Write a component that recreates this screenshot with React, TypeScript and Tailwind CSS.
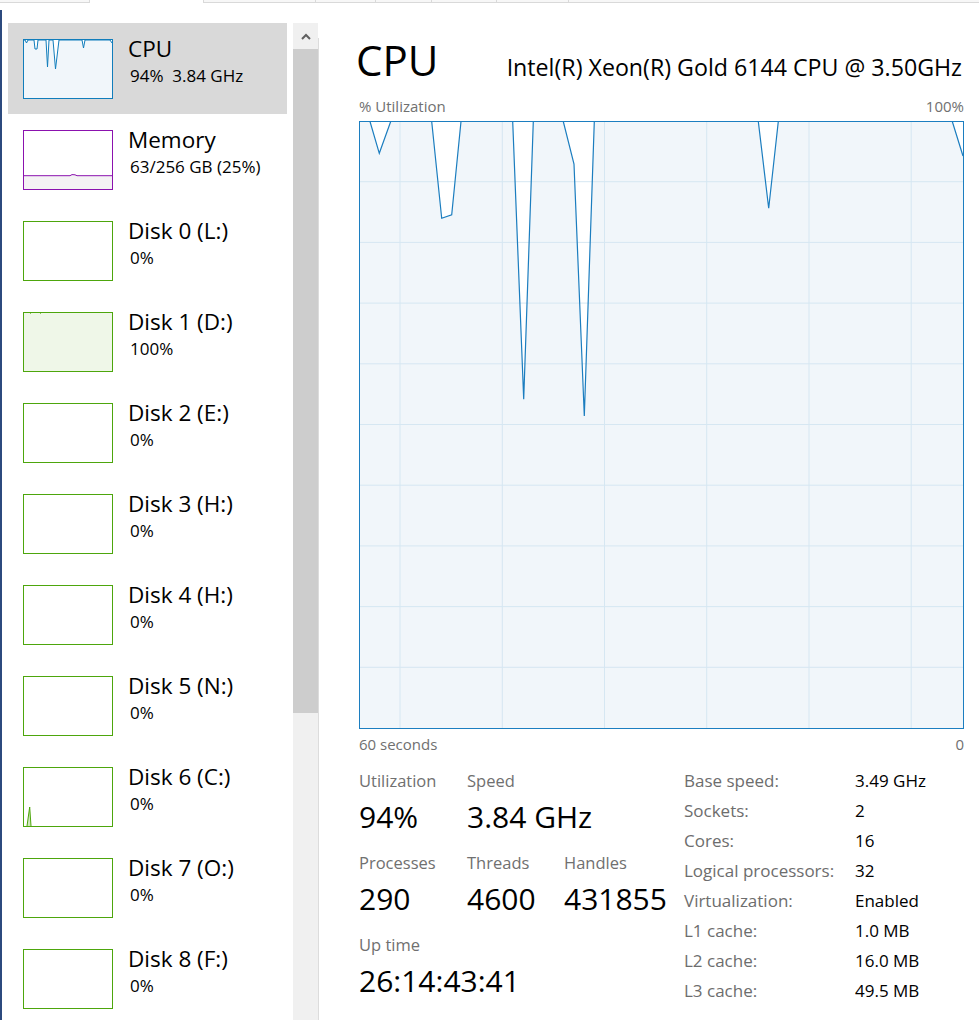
import React from "react";

type Item = {
  title: string;
  sub: string;
  kind: "cpu" | "mem" | "disk" | "diskFull" | "diskSpike";
};

const items: Item[] = [
  { title: "CPU", sub: "94%  3.84 GHz", kind: "cpu" },
  { title: "Memory", sub: "63/256 GB (25%)", kind: "mem" },
  { title: "Disk 0 (L:)", sub: "0%", kind: "disk" },
  { title: "Disk 1 (D:)", sub: "100%", kind: "diskFull" },
  { title: "Disk 2 (E:)", sub: "0%", kind: "disk" },
  { title: "Disk 3 (H:)", sub: "0%", kind: "disk" },
  { title: "Disk 4 (H:)", sub: "0%", kind: "disk" },
  { title: "Disk 5 (N:)", sub: "0%", kind: "disk" },
  { title: "Disk 6 (C:)", sub: "0%", kind: "diskSpike" },
  { title: "Disk 7 (O:)", sub: "0%", kind: "disk" },
  { title: "Disk 8 (F:)", sub: "0%", kind: "disk" },
];

// main graph points, relative to the graph box (605 x 608)
const linePts: [number, number][] = [
  [0, 0.5], [11, 0.5], [20.3, 32.3], [31.7, 0.5], [72.7, 0.5], [82.7, 97.3],
  [92.7, 93.7], [102, 0.5], [153.7, 0.5], [164.7, 278.3], [174.3, 0.5],
  [204.3, 0.5], [215, 43], [225.3, 295], [235.3, 0.5], [399.3, 0.5],
  [409.7, 87.3], [419.3, 0.5], [593.3, 0.5], [604, 35],
];

const cpuThumbPts: [number, number][] = [
  [0, 0], [1, 0], [2.5, 3], [4, 0], [10, 0], [11, 9], [13, 9], [14, 0],
  [22, 0], [23.5, 27], [25, 0], [29, 0], [31.5, 29], [35, 0], [58, 0],
  [59.5, 8], [61, 0], [86, 0], [88, 3],
];

const toStr = (p: [number, number][]) => p.map(([x, y]) => `${x},${y}`).join(" ");

const Thumb: React.FC<{ kind: Item["kind"] }> = ({ kind }) => {
  if (kind === "cpu") {
    return (
      <div className="w-[90px] h-[60px] border border-[#117dbb] bg-white shrink-0">
        <svg width="88" height="58" viewBox="0 0 88 58">
          <polygon points={`${toStr(cpuThumbPts)} 88,58 0,58`} fill="#f1f6fa" />
          <polyline points={toStr(cpuThumbPts)} fill="none" stroke="#117dbb" strokeWidth="1" />
        </svg>
      </div>
    );
  }
  if (kind === "mem") {
    const pts: [number, number][] = [[0, 44.7], [46, 44.7], [48, 43.6], [51, 43.8], [53, 44.7], [88, 44.7]];
    return (
      <div className="w-[90px] h-[60px] border border-[#8b12ae] bg-white shrink-0">
        <svg width="88" height="58" viewBox="0 0 88 58">
          <polygon points={`${toStr(pts)} 88,58 0,58`} fill="#f4f2f4" />
          <polyline points={toStr(pts)} fill="none" stroke="#8b12ae" strokeWidth="1" />
        </svg>
      </div>
    );
  }
  if (kind === "diskFull") {
    return (
      <div className="w-[90px] h-[60px] border border-[#4da60c] bg-[#eff7e8] shrink-0">
        <svg width="88" height="58" viewBox="0 0 88 58">
          <line x1="6" y1="0.5" x2="7" y2="0.5" stroke="#8cc65c" />
          <line x1="16" y1="0.5" x2="17" y2="0.5" stroke="#8cc65c" />
        </svg>
      </div>
    );
  }
  if (kind === "diskSpike") {
    const pts: [number, number][] = [[3, 58], [5.7, 39], [7, 58]];
    return (
      <div className="w-[90px] h-[60px] border border-[#4da60c] bg-white shrink-0">
        <svg width="88" height="58" viewBox="0 0 88 58">
          <polygon points={toStr(pts)} fill="#cfe8bc" />
          <polyline points={toStr(pts)} fill="none" stroke="#4da60c" strokeWidth="1" />
        </svg>
      </div>
    );
  }
  return <div className="w-[90px] h-[60px] border border-[#4da60c] bg-white shrink-0" />;
};

const Graph: React.FC = () => {
  const vx = [41, 143.3, 245.5, 347.7, 450, 552.2];
  const hy = [1, 2, 3, 4, 5, 6, 7, 8, 9].map((k) => k * 60.7);
  return (
    <svg width="605" height="608" viewBox="0 0 605 608" className="block">
      <rect x="0" y="0" width="605" height="608" fill="#ffffff" />
      <polygon points={`${toStr(linePts)} 604,607 0,607`} fill="#f1f6fa" />
      {vx.map((x) => (
        <line key={x} x1={x} y1="0" x2={x} y2="608" stroke="#d6e7f2" strokeWidth="1" />
      ))}
      {hy.map((y) => (
        <line key={y} x1="0" y1={y} x2="605" y2={y} stroke="#d6e7f2" strokeWidth="1" />
      ))}
      <polyline points={toStr(linePts)} fill="none" stroke="#1b7dbf" strokeWidth="1.2" />
      <rect x="0.5" y="0.5" width="604" height="607" fill="none" stroke="#1c7ec0" strokeWidth="1" />
    </svg>
  );
};

const specs: [string, string][] = [
  ["Base speed:", "3.49 GHz"],
  ["Sockets:", "2"],
  ["Cores:", "16"],
  ["Logical processors:", "32"],
  ["Virtualization:", "Enabled"],
  ["L1 cache:", "1.0 MB"],
  ["L2 cache:", "16.0 MB"],
  ["L3 cache:", "49.5 MB"],
];

const Stat: React.FC<{ label: string; value: string }> = ({ label, value }) => (
  <div className="flex flex-col">
    <span className="text-[16.5px] leading-[20px] text-[#707070]">{label}</span>
    <span className="mt-[9px] text-[30px] leading-[34px] text-black whitespace-nowrap">{value}</span>
  </div>
);

export default function App() {
  return (
    <div className="w-[979px] h-[1020px] bg-white overflow-hidden flex flex-col font-['Open_Sans',sans-serif] text-black">
      {/* tab strip remnants */}
      <div className="flex h-[3px] shrink-0">
        <div className="w-[90px] border-b border-r border-[#d9d9d9] bg-[#f7f7f7]" />
        <div className="w-[114px] border-r border-[#d9d9d9]" />
        <div className="w-[112px] border-b border-r border-[#d9d9d9] bg-[#f7f7f7]" />
        <div className="w-[60px] border-b border-r border-[#d9d9d9] bg-[#f7f7f7]" />
        <div className="w-[56px] border-b border-r border-[#d9d9d9] bg-[#f7f7f7]" />
        <div className="w-[65px] border-b border-r border-[#d9d9d9] bg-[#f7f7f7]" />
        <div className="w-[72px] border-b border-r border-[#d9d9d9] bg-[#f7f7f7]" />
        <div className="flex-1 border-b border-[#d9d9d9] bg-[#f7f7f7]" />
      </div>

      <div className="flex flex-1 min-h-0">
        {/* desktop edge */}
        <div className="w-[2px] mt-[7px] bg-[#2c4a7e] shrink-0" />
        <div className="w-[6px] shrink-0" />

        {/* Sidebar list */}
        <div className="w-[279px] pt-[20px] flex flex-col shrink-0">
          {items.map((it, i) => (
            <div
              key={it.title}
              className={`h-[91px] shrink-0 flex items-start pl-[15px] pt-[16px] ${i === 0 ? "bg-[#d9d9d9]" : ""}`}
            >
              <Thumb kind={it.kind} />
              <div className="ml-[15px] -mt-[3px] flex flex-col">
                <span className="text-[22.5px] leading-[26px] whitespace-nowrap">{it.title}</span>
                <span className="mt-[4px] pl-[2px] text-[17px] leading-[20px] whitespace-pre">{it.sub}</span>
              </div>
            </div>
          ))}
        </div>
        <div className="w-[6px] shrink-0" />

        {/* Scrollbar */}
        <div className="w-[25px] mt-[20px] flex flex-col shrink-0">
          <div className="h-[26px] bg-[#f0f0f0] flex items-center justify-center">
            <svg width="10" height="7" viewBox="0 0 10 7">
              <polyline points="1,6 5,2 9,6" fill="none" stroke="#606060" strokeWidth="2" />
            </svg>
          </div>
          <div className="h-[664px] bg-[#cdcdcd]" />
          <div className="flex-1 bg-[#f0f0f0]" />
        </div>
        <div className="w-px mt-[35px] bg-[#dcdcdc] shrink-0" />

        {/* Main panel */}
        <div className="flex-1 pl-[40px] pr-[15px] flex flex-col">
          <div className="pt-[36px] flex items-baseline justify-between">
            <span className="-ml-[3px] text-[42px] leading-[42px]">CPU</span>
            <span className="text-[23.2px] leading-[28px] mr-[2px] whitespace-nowrap">
              Intel(R) Xeon(R) Gold 6144 CPU @ 3.50GHz
            </span>
          </div>

          <div className="mt-[17px] flex justify-between text-[15px] leading-[16px] text-[#707070]">
            <span>% Utilization</span>
            <span>100%</span>
          </div>

          <div className="mt-[7px]">
            <Graph />
          </div>

          <div className="mt-[7px] flex justify-between text-[15px] leading-[16px] text-[#707070]">
            <span>60 seconds</span>
            <span>0</span>
          </div>

          <div className="mt-[14px] flex">
            <div className="w-[325px] pt-[5px] flex flex-col gap-y-[19px]">
              <div className="flex">
                <div className="w-[108px]"><Stat label="Utilization" value="94%" /></div>
                <div><Stat label="Speed" value="3.84 GHz" /></div>
              </div>
              <div className="flex">
                <div className="w-[108px]"><Stat label="Processes" value="290" /></div>
                <div className="w-[97px]"><Stat label="Threads" value="4600" /></div>
                <div><Stat label="Handles" value="431855" /></div>
              </div>
              <div className="flex">
                <Stat label="Up time" value="26:14:43:41" />
              </div>
            </div>

            <div className="flex-1 flex flex-col">
              {specs.map(([k, v]) => (
                <div key={k} className="flex h-[30px] items-center text-[17px] leading-[30px]">
                  <span className="w-[171px] text-[#6d6d6d] whitespace-nowrap">{k}</span>
                  <span className="text-black">{v}</span>
                </div>
              ))}
            </div>
          </div>
        </div>
      </div>
    </div>
  );
}
